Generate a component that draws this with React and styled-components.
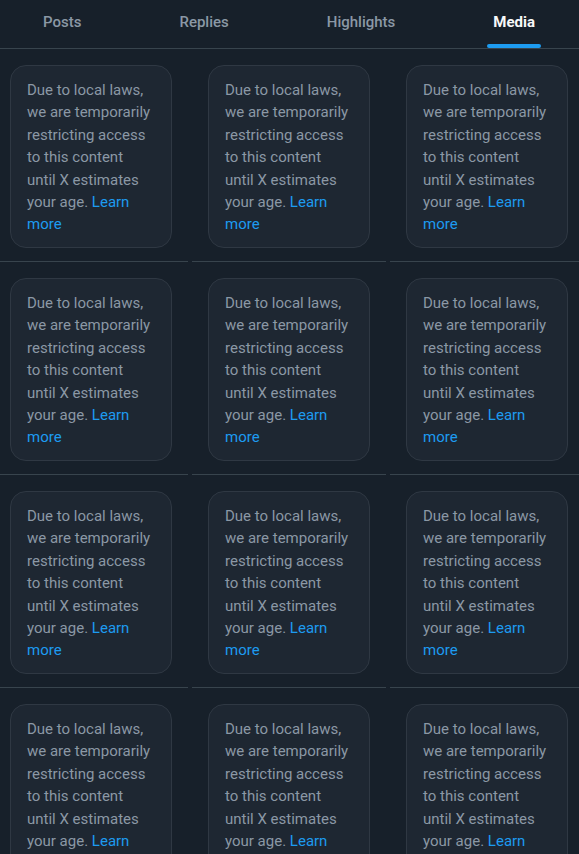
import React from 'react'
import styled, { createGlobalStyle } from 'styled-components'

const GlobalStyle = createGlobalStyle`
    html, body {
        margin: 0;
        padding: 0;
        background: #17202a;
        overflow: hidden;
    }
    body {
        font-family: "Roboto", "Noto Sans", sans-serif;
        -webkit-font-smoothing: antialiased;
    }
`

const Page = styled.div`
    width: 590px;
    margin-left: -6px;
    height: 854px;
    overflow: hidden;
    background: #17202a;
`

const TabBar = styled.nav`
    display: flex;
    height: 48px;
    border-bottom: 1px solid #38444d;
`

const Tab = styled.div`
    flex: 1 1 auto;
    display: flex;
    justify-content: center;
    padding: 0 16px;
`

const TabLabel = styled.span`
    position: relative;
    display: flex;
    align-items: center;
    height: 100%;
    padding-bottom: 4px;
    box-sizing: border-box;
    font-size: 15px;
    font-weight: ${p => (p.$active ? 700 : 500)};
    color: ${p => (p.$active ? '#f7f9f9' : '#8b98a5')};

    &::after {
        content: '';
        display: ${p => (p.$active ? 'block' : 'none')};
        position: absolute;
        left: -6px;
        right: -6px;
        bottom: 0;
        height: 4px;
        border-radius: 9999px;
        background: #1d9bf0;
    }
`

const Grid = styled.div`
    display: grid;
    grid-template-columns: repeat(3, 194px);
    column-gap: 4px;
`

const Cell = styled.div`
    padding: 16px 16px 13px;
    border-bottom: 1px solid #38444d;
`

const Notice = styled.div`
    height: 183px;
    box-sizing: border-box;
    background: #1e2732;
    border: 1px solid #2f3843;
    border-radius: 16px;
    padding: 13px 16px 11px;
    font-size: 15px;
    line-height: 22.4px;
    color: #8b98a5;
    overflow: hidden;

    & a {
        color: #1d9bf0;
        text-decoration: none;
    }
`

const tabs = ['Posts', 'Replies', 'Highlights', 'Media']

const App = () => {
    const cells = Array.from({ length: 12 })

    return (
        <Page>
            <GlobalStyle />
            <TabBar>
                {tabs.map(t => (
                    <Tab key={t}>
                        <TabLabel $active={t === 'Media'}>{t}</TabLabel>
                    </Tab>
                ))}
            </TabBar>
            <Grid>
                {cells.map((_, i) => (
                    <Cell key={i}>
                        <Notice>
                            Due to local laws, we are temporarily restricting access to this content until X estimates your age.{' '}
                            <a href="#">Learn more</a>
                        </Notice>
                    </Cell>
                ))}
            </Grid>
        </Page>
    )
}

export default App
